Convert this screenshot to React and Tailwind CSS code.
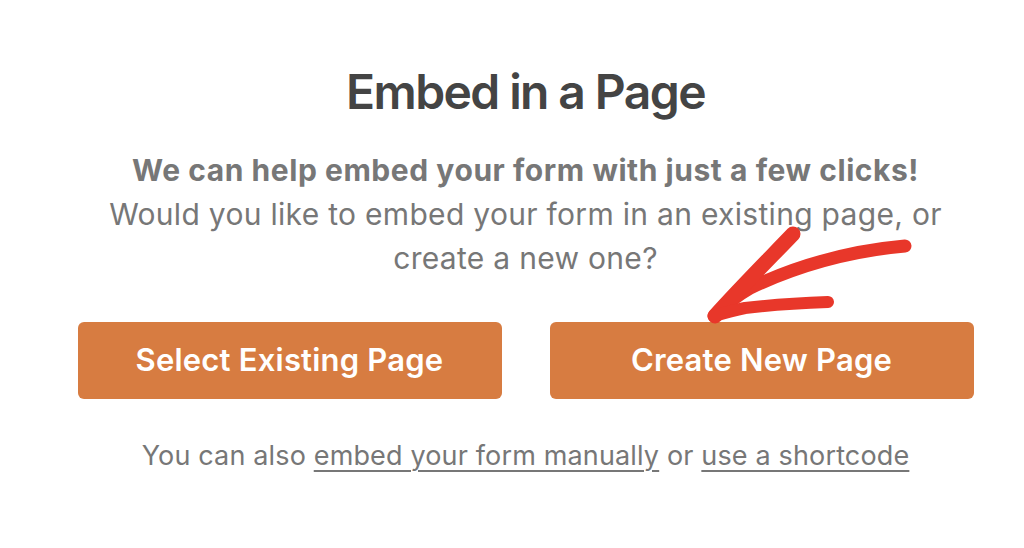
export default function App() {
  return (
    <div
      className="relative w-[1024px] h-[548px] bg-white overflow-hidden flex flex-col items-center pl-[27px]"
      style={{ fontFamily: "Inter, 'Noto Sans', sans-serif" }}
    >
      <h1 className="mt-[63px] text-[48px] leading-[58px] font-semibold text-[#444444] tracking-[-1.6px]">
        Embed in a Page
      </h1>
      <div className="mt-[27px] text-center text-[30px] leading-[44px] text-[#777777] tracking-[0.3px]">
        <p className="font-bold tracking-[0.55px]">We can help embed your form with just a few clicks!</p>
        <p>Would you like to embed your form in an existing page, or</p>
        <p>create a new one?</p>
      </div>
      <div className="mt-[42px] flex gap-[48px]">
        <button className="w-[424px] h-[77px] rounded-[6px] bg-[#d77c41] text-white text-[31px] font-semibold tracking-[0.2px]">
          Select Existing Page
        </button>
        <button className="w-[424px] h-[77px] rounded-[6px] bg-[#d77c41] text-white text-[31px] font-semibold tracking-[0.2px]">
          Create New Page
        </button>
      </div>
      <p className="mt-[37px] text-[27px] leading-[40px] text-[#777777] tracking-[0.15px]">
        You can also{" "}
        <span className="underline decoration-[2px] underline-offset-[5px]">embed your form manually</span> or{" "}
        <span className="underline decoration-[2px] underline-offset-[5px]">use a shortcode</span>
      </p>
      <svg
        className="absolute left-0 top-0 pointer-events-none"
        width="1024"
        height="548"
        viewBox="0 0 1024 548"
      >
        <g fill="none" stroke="#e8372a" strokeLinecap="round" strokeLinejoin="round">
          <path d="M905 246 C 860 250, 805 262, 750 288 C 736 296, 724 306, 714 316" strokeWidth="13" />
          <path d="M793 234 C 770 258, 740 288, 715 316" strokeWidth="15" />
          <path d="M828 302 C 800 303, 770 305, 745 308 C 735 310, 724 313, 714 316" strokeWidth="12" />
        </g>
      </svg>
    </div>
  );
}
